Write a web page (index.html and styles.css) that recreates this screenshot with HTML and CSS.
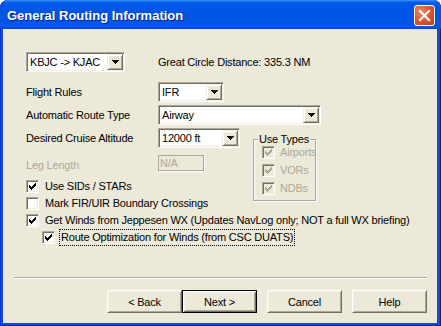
FILE: index.html
```html
<!DOCTYPE html>
<html>
<head>
<meta charset="utf-8">
<title>General Routing Information</title>
<link rel="stylesheet" href="styles.css">
</head>
<body>
<div class="window">
  <div class="titlebar">
    <span class="title">General Routing Information</span>
    <div class="close">
      <svg width="19" height="19" viewBox="0 0 19 19"><path d="M5 5L14 14M14 5L5 14" stroke="#fff" stroke-width="2.2" stroke-linecap="square" fill="none"/></svg>
    </div>
  </div>
  <div class="client">
    <div class="row">
      <div class="combo w-route"><span class="val">KBJC -&gt; KJAC</span><span class="drop"><svg width="7" height="4" viewBox="0 0 7 4"><path d="M0 0h7v1h-7zM1 1h5v1h-5zM2 2h3v1h-3zM3 3h1v1h-1z" fill="#000"/></svg></span></div>
      <span class="distance">Great Circle Distance: 335.3 NM</span>
    </div>
    <div class="row field r-rules">
      <span class="lbl">Flight Rules</span>
      <div class="combo w-rules"><span class="val">IFR</span><span class="drop"><svg width="7" height="4" viewBox="0 0 7 4"><path d="M0 0h7v1h-7zM1 1h5v1h-5zM2 2h3v1h-3zM3 3h1v1h-1z" fill="#000"/></svg></span></div>
    </div>
    <div class="row field r-type">
      <span class="lbl">Automatic Route Type</span>
      <div class="combo w-type"><span class="val">Airway</span><span class="drop"><svg width="7" height="4" viewBox="0 0 7 4"><path d="M0 0h7v1h-7zM1 1h5v1h-5zM2 2h3v1h-3zM3 3h1v1h-1z" fill="#000"/></svg></span></div>
    </div>
    <div class="split">
      <div class="left">
        <div class="row field">
          <span class="lbl">Desired Cruise Altitude</span>
          <div class="combo w-alt"><span class="val">12000 ft</span><span class="drop"><svg width="7" height="4" viewBox="0 0 7 4"><path d="M0 0h7v1h-7zM1 1h5v1h-5zM2 2h3v1h-3zM3 3h1v1h-1z" fill="#000"/></svg></span></div>
        </div>
        <div class="row field r-leg">
          <span class="lbl disabled">Leg Length</span>
          <div class="edit">N/A</div>
        </div>
        <div class="check r-sids"><span class="box"><svg width="7" height="7" viewBox="0 0 7 7"><path d="M6 0h1v1h-1zM5 1h2v1h-2zM0 2h1v1h-1zM4 2h3v1h-3zM0 3h2v1h-2zM3 3h3v1h-3zM0 4h5v1h-5zM1 5h3v1h-3zM2 6h1v1h-1z" fill="#000"/></svg></span><span>Use SIDs / STARs</span></div>
        <div class="check r-next"><span class="box"></span><span>Mark FIR/UIR Boundary Crossings</span></div>
      </div>
      <fieldset class="group">
        <legend>Use Types</legend>
        <div class="check dis"><span class="box"><svg width="7" height="7" viewBox="0 0 7 7"><path d="M6 0h1v1h-1zM5 1h2v1h-2zM0 2h1v1h-1zM4 2h3v1h-3zM0 3h2v1h-2zM3 3h3v1h-3zM0 4h5v1h-5zM1 5h3v1h-3zM2 6h1v1h-1z" fill="#aca899"/></svg></span><span>Airports</span></div>
        <div class="check dis g-next"><span class="box"><svg width="7" height="7" viewBox="0 0 7 7"><path d="M6 0h1v1h-1zM5 1h2v1h-2zM0 2h1v1h-1zM4 2h3v1h-3zM0 3h2v1h-2zM3 3h3v1h-3zM0 4h5v1h-5zM1 5h3v1h-3zM2 6h1v1h-1z" fill="#aca899"/></svg></span><span>VORs</span></div>
        <div class="check dis g-next"><span class="box"><svg width="7" height="7" viewBox="0 0 7 7"><path d="M6 0h1v1h-1zM5 1h2v1h-2zM0 2h1v1h-1zM4 2h3v1h-3zM0 3h2v1h-2zM3 3h3v1h-3zM0 4h5v1h-5zM1 5h3v1h-3zM2 6h1v1h-1z" fill="#aca899"/></svg></span><span>NDBs</span></div>
      </fieldset>
    </div>
    <div class="check r-next"><span class="box"><svg width="7" height="7" viewBox="0 0 7 7"><path d="M6 0h1v1h-1zM5 1h2v1h-2zM0 2h1v1h-1zM4 2h3v1h-3zM0 3h2v1h-2zM3 3h3v1h-3zM0 4h5v1h-5zM1 5h3v1h-3zM2 6h1v1h-1z" fill="#000"/></svg></span><span>Get Winds from Jeppesen WX (Updates NavLog only; NOT a full WX briefing)</span></div>
    <div class="check r-next r-indent"><span class="box"><svg width="7" height="7" viewBox="0 0 7 7"><path d="M6 0h1v1h-1zM5 1h2v1h-2zM0 2h1v1h-1zM4 2h3v1h-3zM0 3h2v1h-2zM3 3h3v1h-3zM0 4h5v1h-5zM1 5h3v1h-3zM2 6h1v1h-1z" fill="#000"/></svg></span><span class="focus">Route Optimization for Winds (from CSC DUATS)</span></div>
    <div class="separator"></div>
    <div class="buttons">
      <button class="btn">&lt; Back</button>
      <button class="btn default">Next &gt;</button>
      <button class="btn gap">Cancel</button>
      <button class="btn gap">Help</button>
    </div>
  </div>
</div>
</body>
</html>
```

FILE: styles.css
```css
html, body {
  margin: 0;
  padding: 0;
  background: #ffffff;
}

.window {
  width: 441px;
  height: 326px;
  box-sizing: border-box;
  display: flex;
  flex-direction: column;
  background: #0a4fdc;
  border-radius: 8px 8px 0 0;
  overflow: hidden;
  box-shadow: inset 1px 0 #0831d9, inset -1px 0 #001ea0, inset 0 -1px #001ea0;
  font-family: "Liberation Sans", Arial, sans-serif;
  font-size: 11px;
  letter-spacing: -0.2px;
  color: #000;
}

.titlebar {
  height: 29px;
  flex: none;
  display: flex;
  align-items: flex-start;
  background: linear-gradient(to bottom, #3d95ff 0px, #0a5fe9 2px, #0057e8 5px, #0054e3 14px, #0055e6 22px, #0a58e6 26px, #0047d6 29px);
}

.title {
  padding: 8px 0 0 7px;
  line-height: 16px;
  font-size: 13px;
  font-weight: bold;
  letter-spacing: 0;
  color: #fff;
  text-shadow: 1px 1px #0a1f8c;
}

.close {
  margin: 5px 6px 0 auto;
  width: 21px;
  height: 21px;
  box-sizing: border-box;
  border: 1px solid #fff;
  border-radius: 3px;
  background: radial-gradient(circle at 30% 30%, #e98a6a 0%, #db5a36 45%, #c4391c 100%);
  display: flex;
  align-items: center;
  justify-content: center;
}

.close svg {
  display: block;
}

.client {
  flex: 1;
  margin: 0 4px 3px 3px;
  background: #ece9d8;
  padding: 23px 0 0 23px;
  display: flex;
  flex-direction: column;
  align-items: flex-start;
}

.row {
  display: flex;
  align-items: center;
  height: 20px;
}

.r-rules {
  margin-top: 10px;
}

.r-type {
  margin-top: 3px;
}

.lbl {
  width: 132px;
  flex: none;
  line-height: 13px;
}

.disabled {
  color: #aca899;
}

.combo {
  height: 20px;
  box-sizing: border-box;
  display: flex;
  align-items: stretch;
  background: #fff;
  border: 1px solid;
  border-color: #aca899 #fff #fff #aca899;
  box-shadow: inset 1px 1px #716f64, inset -1px -1px #f1efe2;
  padding: 1px;
}

.val {
  flex: 1;
  line-height: 16px;
  padding-left: 2px;
  white-space: nowrap;
}

.drop {
  width: 16px;
  box-sizing: border-box;
  background: #ece9d8;
  border: 1px solid;
  border-color: #f1efe2 #716f64 #716f64 #f1efe2;
  box-shadow: inset 1px 1px #fff, inset -1px -1px #aca899;
  display: flex;
  align-items: center;
  justify-content: center;
}

.drop svg {
  display: block;
}

.w-route { width: 99px; }
.w-rules { width: 66px; }
.w-type { width: 163px; }
.w-alt { width: 82px; }

.distance {
  margin-left: 33px;
  line-height: 13px;
}

.split {
  margin-top: 3px;
  display: flex;
  align-items: flex-start;
}

.left {
  width: 227px;
  display: flex;
  flex-direction: column;
  align-items: flex-start;
}

.r-leg {
  margin-top: 7px;
  height: 16px;
}

.r-leg .lbl {
  padding-top: 5px;
}

.edit {
  width: 46px;
  height: 16px;
  box-sizing: border-box;
  border: 1px solid #aca899;
  box-shadow: 1px 1px 0 #fff;
  color: #aca899;
  line-height: 14px;
  padding-left: 1px;
}

.check {
  display: flex;
  align-items: center;
  height: 13px;
  line-height: 13px;
  white-space: nowrap;
}

.check .box {
  margin-right: 6px;
}

.r-sids {
  margin-top: 9px;
}

.r-next {
  margin-top: 4px;
}

.r-indent {
  margin-left: 16px;
}

.box {
  width: 13px;
  height: 13px;
  flex: none;
  box-sizing: border-box;
  border: 1px solid;
  border-color: #aca899 #fff #fff #aca899;
  box-shadow: inset 1px 1px #716f64, inset -1px -1px #f1efe2;
  background: #fff;
  display: flex;
  align-items: center;
  justify-content: center;
}

.box svg {
  display: block;
}

.dis {
  color: #aca899;
}

.dis .box {
  background: #ece9d8;
}

.group .check {
  margin-left: 8px;
}

.group .check .box {
  margin-right: 5px;
}

.group {
  margin: 5px 0 0 0;
  padding: 0;
  width: 63px;
  height: 68px;
  box-sizing: border-box;
  min-width: 0;
  border: 1px solid #aca899;
  box-shadow: inset 1px 1px #fff, 1px 1px 0 #fff;
}

.group legend {
  padding: 0 1px;
  margin-left: 4px;
  line-height: 13px;
  white-space: nowrap;
  background: #ece9d8;
}

.g-next {
  margin-top: 5px;
}

.focus {
  outline: 1px dotted #000;
  outline-offset: 1px;
}

.separator {
  margin: 33px 0 0 -12px;
  width: 413px;
  height: 0;
  border-top: 1px solid #aca899;
  border-bottom: 1px solid #fff;
}

.buttons {
  margin-top: 11px;
  align-self: stretch;
  display: flex;
  justify-content: flex-end;
  padding-right: 10px;
}

.btn {
  width: 75px;
  height: 23px;
  box-sizing: border-box;
  margin: 0;
  padding: 0;
  font-family: "Liberation Sans", Arial, sans-serif;
  font-size: 11px;
  letter-spacing: -0.2px;
  color: #000;
  background: #ece9d8;
  border: 1px solid;
  border-color: #fff #716f64 #716f64 #fff;
  box-shadow: inset 1px 1px #f1efe2, inset -1px -1px #aca899;
  border-radius: 0;
}

.btn.default {
  border: 1px solid #000;
  box-shadow: inset 1px 1px #fff, inset -1px -1px #716f64, inset 2px 2px #f1efe2, inset -2px -2px #aca899;
}

.btn.gap {
  margin-left: 10px;
}
```
